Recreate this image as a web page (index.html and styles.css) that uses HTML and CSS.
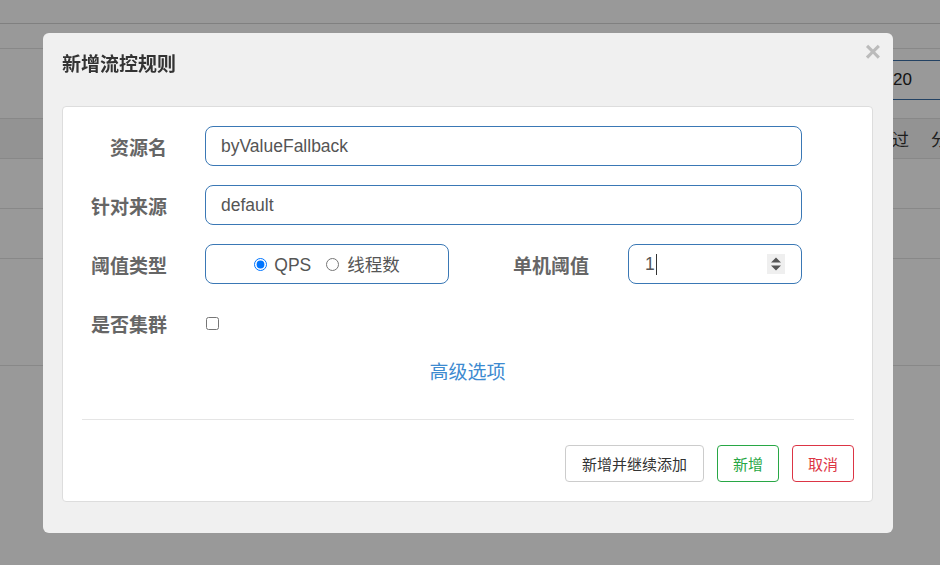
FILE: index.html
```html
<!DOCTYPE html>
<html lang="zh-CN">
<head>
<meta charset="utf-8">
<title>新增流控规则</title>
<link rel="stylesheet" href="styles.css">
</head>
<body>
<div class="page">
  <div class="topbar"></div>
  <div class="subbar"></div>
  <div class="toolbar">
    <div class="search">20</div>
  </div>
  <div class="thead">
    <span class="th1">通过</span>
    <span class="th2">分</span>
  </div>
  <div class="trow"></div>
  <div class="trow"></div>
  <div class="trow tall"></div>
</div>
<div class="overlay"></div>

<div class="modal">
  <div class="modal-header">
    <h3 class="modal-title">新增流控规则</h3>
    <span class="close">×</span>
  </div>
  <div class="panel">
    <div class="form-row">
      <label class="label">资源名</label>
      <div class="field wide">byValueFallback</div>
    </div>
    <div class="form-row">
      <label class="label">针对来源</label>
      <div class="field wide">default</div>
    </div>
    <div class="form-row">
      <label class="label">阈值类型</label>
      <div class="field radios">
        <input type="radio" name="grade" class="radio" checked>
        <span class="radio-text">QPS</span>
        <input type="radio" name="grade" class="radio second">
        <span class="radio-text">线程数</span>
      </div>
      <label class="label2">单机阈值</label>
      <div class="field number">
        <span class="num">1</span><span class="caret"></span>
        <span class="grow"></span>
        <span class="spinner">
          <svg width="18" height="20" viewBox="0 0 18 20"><path d="M4 8.5 L9 3.5 L14 8.5 Z M4 11.5 L9 16.5 L14 11.5 Z" fill="#555"/></svg>
        </span>
      </div>
    </div>
    <div class="form-row">
      <label class="label">是否集群</label>
      <input type="checkbox" class="check">
    </div>
    <div class="advanced">高级选项</div>
    <div class="divider"></div>
    <div class="actions">
      <button class="btn">新增并继续添加</button>
      <button class="btn btn-success">新增</button>
      <button class="btn btn-danger">取消</button>
    </div>
  </div>
</div>
</body>
</html>
```

FILE: styles.css
```css
html, body {
  margin: 0;
  padding: 0;
  width: 940px;
  height: 565px;
  overflow: hidden;
  background: #fff;
  font-family: "Liberation Sans", "Noto Sans CJK SC", sans-serif;
}

.page {
  width: 940px;
  height: 565px;
  overflow: hidden;
  color: #333;
}
.topbar {
  height: 23px;
  border-bottom: 1px solid #d6d6d6;
}
.subbar {
  height: 24px;
  border-bottom: 1px solid #e3e3e3;
}
.toolbar {
  height: 69px;
  display: flex;
  justify-content: flex-end;
  padding-top: 11px;
  box-sizing: border-box;
}
.search {
  width: 100px;
  height: 40px;
  margin-right: -30px;
  border: 1px solid #3b6ea5;
  border-right: none;
  box-sizing: border-box;
  display: flex;
  align-items: center;
  font-size: 17px;
  color: #222;
  padding-left: 22px;
}
.thead {
  height: 41px;
  background: #f5f5f5;
  border-top: 1px solid #e3e3e3;
  border-bottom: 1px solid #e3e3e3;
  box-sizing: border-box;
  display: flex;
  align-items: center;
  padding-left: 875px;
  font-size: 17px;
  color: #333;
  white-space: nowrap;
}
.th2 { margin-left: 22px; }
.trow {
  height: 49px;
  border-bottom: 1px solid #e3e3e3;
}
.trow.tall { height: 106px; }

.overlay {
  position: fixed;
  inset: 0;
  background: rgba(0, 0, 0, 0.4);
}

.modal {
  position: absolute;
  left: 43px;
  top: 33px;
  width: 850px;
  height: 500px;
  box-sizing: border-box;
  background: #f0f0f0;
  border-radius: 6px;
  padding: 0 20px 31px 19px;
}
.modal-header {
  height: 73px;
  position: relative;
}
.modal-title {
  margin: 0;
  padding-top: 20px;
  font-size: 19px;
  line-height: 24px;
  font-weight: bold;
  color: #333;
}
.close {
  position: absolute;
  right: -8px;
  top: 3px;
  font-size: 28px;
  font-weight: bold;
  line-height: 32px;
  color: #bbb;
}

.panel {
  background: #fff;
  border: 1px solid #ddd;
  border-radius: 4px;
  height: 396px;
  box-sizing: border-box;
  padding: 19px 18px 19px 0;
  display: flex;
  flex-direction: column;
}
.form-row {
  display: flex;
  align-items: center;
  height: 40px;
  margin-bottom: 19px;
}
.label {
  width: 104px;
  text-align: right;
  margin-right: 38px;
  font-size: 19px;
  font-weight: bold;
  color: #666;
  flex: none;
}
.label2 {
  margin-left: 64px;
  margin-right: 38px;
  font-size: 19px;
  font-weight: bold;
  color: #666;
  width: 77px;
  white-space: nowrap;
}
.field {
  height: 40px;
  box-sizing: border-box;
  border: 1px solid #3a78b5;
  border-radius: 8px;
  display: flex;
  align-items: center;
  padding-left: 15px;
  font-size: 17.5px;
  color: #555;
}
.field.wide { width: 597px; }
.radios {
  width: 244px;
  justify-content: center;
  padding-left: 0;
}
.radio {
  margin: 0 7px 0 0;
  width: 13px;
  height: 13px;
}
.radio.second { margin-left: 15px; margin-right: 8px; }
.radio-text { line-height: 20px; padding-top: 2px; }
.number {
  width: 174px;
  padding-left: 16px;
  padding-right: 16px;
}
.num { line-height: 20px; }
.caret {
  width: 1px;
  height: 21px;
  background: #333;
  margin-left: 1px;
}
.grow { flex: 1; }
.spinner {
  width: 18px;
  height: 20px;
  background: #efefef;
  display: flex;
}
.check {
  margin: 0 0 0 1px;
  width: 13px;
  height: 13px;
}
.advanced {
  margin-top: -1px;
  text-align: center;
  font-size: 19px;
  line-height: 24px;
  color: #3d8ad0;
  padding-left: 18px;
}
.divider {
  margin: 34px 0 0 19px;
  border-top: 1px solid #e5e5e5;
}
.actions {
  margin-top: 25px;
  display: flex;
  justify-content: flex-end;
  gap: 13px;
}
.btn {
  height: 37px;
  box-sizing: border-box;
  border: 1px solid #ccc;
  border-radius: 4px;
  background: #fff;
  font-family: "Liberation Sans", "Noto Sans CJK SC", sans-serif;
  font-size: 15px;
  color: #333;
  padding: 0 16px;
  min-width: 62px;
}
.btn-success { border-color: #28a745; color: #28a745; padding: 0; width: 62px; }
.btn-danger { border-color: #dc3545; color: #dc3545; padding: 0; width: 62px; }
```
